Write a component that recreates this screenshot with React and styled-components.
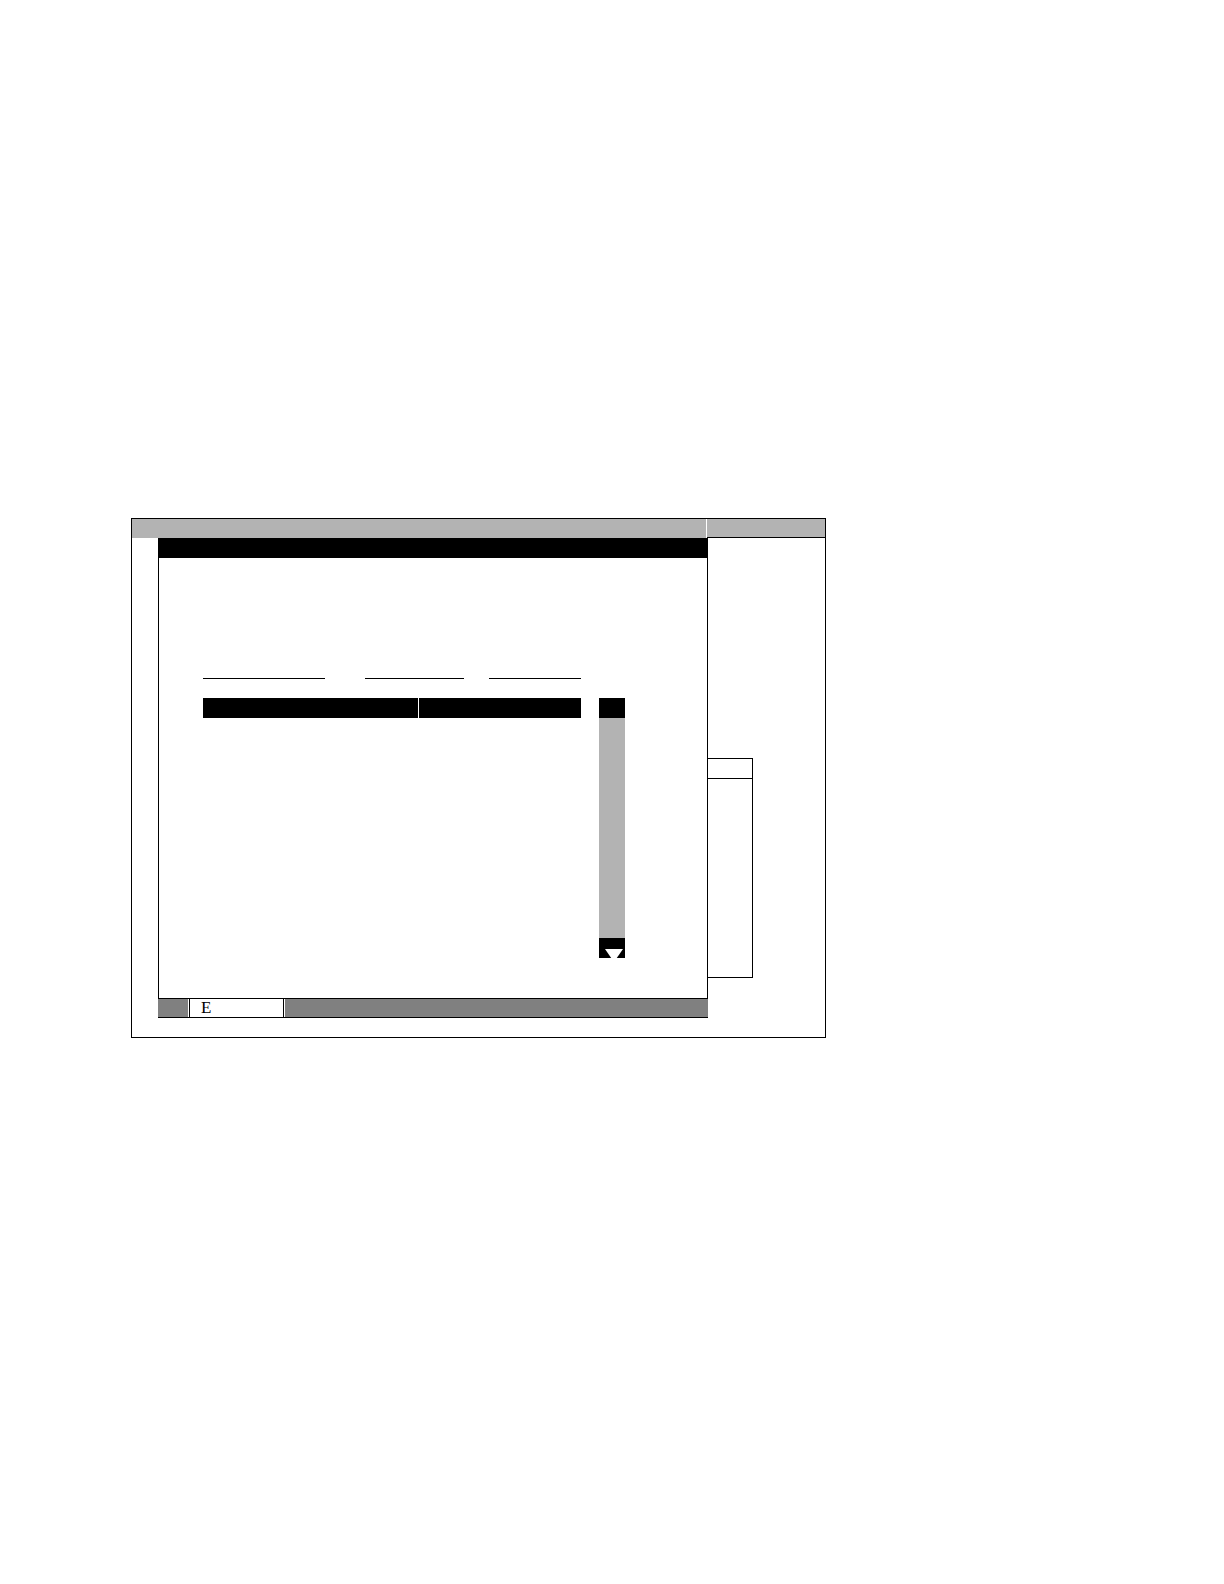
import styled, { createGlobalStyle } from "styled-components";

const GlobalStyle = createGlobalStyle`
    html, body {
        margin: 0;
        padding: 0;
        background: #fff;
    }
    * {
        box-sizing: border-box;
    }
`

function App(){
    return(
    <>
    <GlobalStyle/>
    <Page>
        <Frame>
            <TitleRow>
                <TitleMain/>
                <TitleSide/>
            </TitleRow>
            <Body>
                <Gutter/>
                <Window>
                    <WindowTitle/>
                    <Content>
                        <Fields>
                            <Field w={122}/>
                            <Field w={99} gap={40}/>
                            <Field w={92} gap={25}/>
                        </Fields>
                        <ListArea>
                            <List>
                                <ListHeader>
                                    <HeaderCell w={215}/>
                                    <HeaderCell w={162}/>
                                </ListHeader>
                            </List>
                            <Scrollbar>
                                <ScrollEnd/>
                                <ScrollTrack/>
                                <ScrollEnd>
                                    <svg width="26" height="20" viewBox="0 0 26 20">
                                        <polygon points="6,11 24,11 15,24" fill="#fff"/>
                                    </svg>
                                </ScrollEnd>
                            </Scrollbar>
                        </ListArea>
                    </Content>
                    <StatusBar>
                        <StatusGray w={30}/>
                        <StatusField>E</StatusField>
                        <StatusGray grow/>
                    </StatusBar>
                </Window>
                <Side>
                    <SideBox>
                        <SideHead/>
                    </SideBox>
                </Side>
            </Body>
        </Frame>
    </Page>
    </>
    )
}

const Page = styled.div`
    width: 1224px;
    min-height: 1584px;
    padding: 518px 0 0 131px;
    font-family: "Liberation Serif", serif;
`
const Frame = styled.div`
    width: 695px;
    height: 520px;
    border: 1px solid #000;
    display: flex;
    flex-direction: column;
`
const TitleRow = styled.div`
    display: flex;
    height: 19px;
    gap: 1px;
    background: #fff;
`
const TitleMain = styled.div`
    width: 574px;
    background: #b3b3b3;
`
const TitleSide = styled.div`
    flex: 1;
    background: #b3b3b3;
    border-bottom: 1px solid #000;
`
const Body = styled.div`
    display: flex;
    flex: 1;
`
const Gutter = styled.div`
    width: 26px;
`
const Window = styled.div`
    width: 550px;
    height: 480px;
    border-left: 1px solid #000;
    border-right: 1px solid #000;
    display: flex;
    flex-direction: column;
`
const WindowTitle = styled.div`
    height: 20px;
    background: #000;
    margin: 0 -1px;
`
const Content = styled.div`
    flex: 1;
    padding: 120px 0 0 44px;
    display: flex;
    flex-direction: column;
    gap: 19px;
`
const Fields = styled.div`
    display: flex;
    height: 1px;
`
const Field = styled.div`
    width: ${p => p.w}px;
    margin-left: ${p => p.gap || 0}px;
    border-top: 1px solid #000;
`
const ListArea = styled.div`
    display: flex;
    gap: 18px;
`
const List = styled.div`
    width: 378px;
`
const ListHeader = styled.div`
    display: flex;
    gap: 1px;
    height: 20px;
`
const HeaderCell = styled.div`
    width: ${p => p.w}px;
    background: #000;
`
const Scrollbar = styled.div`
    width: 26px;
    height: 260px;
    display: flex;
    flex-direction: column;
`
const ScrollEnd = styled.div`
    height: 20px;
    background: #000;
    overflow: hidden;
    svg { display: block; }
`
const ScrollTrack = styled.div`
    flex: 1;
    background: #b3b3b3;
`
const StatusBar = styled.div`
    height: 20px;
    display: flex;
    gap: 1px;
    background: #fff;
    border-top: 1px solid #000;
    border-bottom: 1px solid #000;
    margin: 0 -1px;
`
const StatusGray = styled.div`
    width: ${p => p.w ? p.w + "px" : "auto"};
    flex: ${p => p.grow ? 1 : "none"};
    background: #808080;
`
const StatusField = styled.div`
    width: 95px;
    background: #fff;
    border-left: 1px solid #000;
    border-right: 1px solid #000;
    padding-left: 11px;
    font-size: 17px;
    line-height: 18px;
    color: #000;
`
const Side = styled.div`
    flex: 1;
    padding-top: 220px;
`
const SideBox = styled.div`
    width: 45px;
    height: 220px;
    border: 1px solid #000;
    border-left: none;
`
const SideHead = styled.div`
    height: 20px;
    border-bottom: 1px solid #000;
`

export default App;
